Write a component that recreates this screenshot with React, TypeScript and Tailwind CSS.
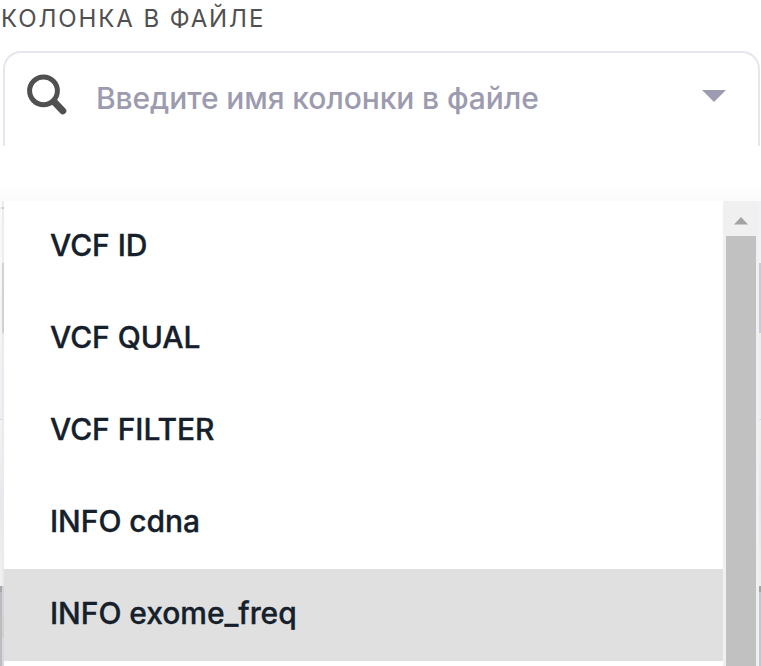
const options = ["VCF ID", "VCF QUAL", "VCF FILTER", "INFO cdna", "INFO exome_freq"];

function SearchIcon() {
  return (
    <svg className="ml-[20px] mt-[20px] h-[44px] w-[44px] shrink-0" viewBox="0 0 44 44" fill="none" stroke="#505050">
      <circle cx="18.5" cy="17.8" r="13.9" strokeWidth="5" />
      <path d="M29 28.6 L37.8 37.8" strokeWidth="7" strokeLinecap="round" />
    </svg>
  );
}

function SearchField() {
  return (
    <div className="ml-[3px] flex h-[95px] w-[757px] rounded-t-[18px] border-2 border-b-0 border-[#e6e6ee]">
      <SearchIcon />
      <span className="ml-[27px] mt-[23px] flex-1 whitespace-nowrap text-[30px] font-medium leading-[44px] tracking-[-0.1px] text-[#9c9bb0]">
        Введите имя колонки в файле
      </span>
      <svg className="mr-[32px] mt-[37px] h-[13px] w-[24px] shrink-0" viewBox="0 0 24 13">
        <path d="M0 0H24L12 12Z" fill="#9c9bb0" />
      </svg>
    </div>
  );
}

function LeftEdge() {
  return (
    <div className="flex w-[4px] shrink-0">
      <div className="flex w-[2px] flex-col">
        <div className="h-[6px] bg-[#fbfbfb]" />
        <div className="h-[2px] bg-[#ececee]" />
        <div className="h-[210px] bg-linear-to-b from-[#fafafa] to-[#f0f0f2]" />
        <div className="h-[1px] bg-[#d5d5da]" />
        <div className="h-[166px] bg-linear-to-b from-[#f4f4f5] via-[#e8e8ea] to-[#f2f2f2]" />
        <div className="h-[6px] bg-[#a8a8a8]" />
        <div className="flex-1 bg-[#bdbdbd]" />
      </div>
      <div className="flex w-[2px] flex-col">
        <div className="h-[6px] bg-[#ececf2]" />
        <div className="h-[2px] bg-[#c9c9d0]" />
        <div className="h-[53px] bg-[#ececf2]" />
        <div className="h-[72px] rounded-l-[2px] bg-[#d1d0d6]" />
        <div className="h-[252px] bg-[#e9e9f0]" />
        <div className="h-[32px] bg-[#d3d3dc]" />
        <div className="h-[20px] bg-[#d3cfcb]" />
        <div className="flex-1 bg-[#d8d8e1]" />
      </div>
    </div>
  );
}

function RightEdge() {
  return (
    <div className="flex w-[2px] shrink-0 flex-col">
      <div className="h-[62px] bg-[#f2f2f4]" />
      <div className="h-[70px] bg-[#cccbd4]" />
      <div className="h-[86px] bg-[#ededf0]" />
      <div className="h-[1px] bg-[#d5d5dd]" />
      <div className="h-[166px] bg-linear-to-b from-[#f0f0f1] via-[#e6e6e9] to-[#eeeeee]" />
      <div className="h-[6px] bg-[#a3a3a6]" />
      <div className="flex-1 bg-[#c6c6ce]" />
    </div>
  );
}

function Scrollbar() {
  return (
    <div className="flex w-[36px] shrink-0 flex-col bg-[#f0f0f0]">
      <div className="flex h-[35px] shrink-0 pl-[11px] pt-[16px]">
        <svg className="h-[8px] w-[14px]" viewBox="0 0 14 8">
          <path d="M0 7.5L7 0L14 7.5Z" fill="#a3a3a3" />
        </svg>
      </div>
      <div className="ml-[3px] w-[30px] flex-1 bg-[#c1c1c1]" />
    </div>
  );
}

export default function App() {
  return (
    <div className="flex h-[666px] w-[761px] flex-col overflow-hidden bg-white font-['Inter',sans-serif]">
      <div className="h-[51px] shrink-0 whitespace-nowrap pl-px text-[24px] leading-[37px] tracking-[1.9px] text-[#505050]">
        КОЛОНКА В ФАЙЛЕ
      </div>
      <SearchField />
      <div className="mt-[35px] h-[20px] shrink-0 bg-linear-to-b from-white to-[#fbfbfb]" />
      <div className="flex h-[465px] shrink-0">
        <LeftEdge />
        <ul className="flex-1 overflow-hidden bg-white">
          {options.map((option, index) => (
            <li
              key={option}
              className={
                "flex h-[92px] items-center whitespace-nowrap pb-[4px] pl-[46px] text-[30px] font-medium leading-[44px] tracking-[-0.05px] text-[#15202b] [-webkit-text-stroke:0.35px_#15202b] " +
                (index === 4 ? "bg-[#e0e0e0]" : "bg-white")
              }
            >
              {option}
            </li>
          ))}
        </ul>
        <Scrollbar />
        <RightEdge />
      </div>
    </div>
  );
}
